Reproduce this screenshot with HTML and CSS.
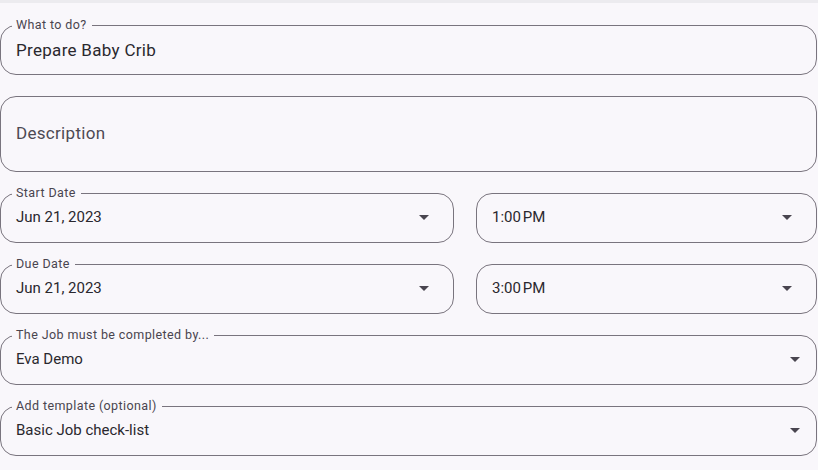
FILE: index.html
```html
<!DOCTYPE html>
<html lang="en">
<head>
<meta charset="utf-8">
<title>New Job</title>
<link rel="stylesheet" href="styles.css">
</head>
<body>
<div class="page">
  <div class="topbar"></div>
  <form class="form">
    <div class="field">
      <span class="label">What to do?</span>
      <span class="value big">Prepare Baby Crib</span>
    </div>
    <div class="field desc">
      <span class="placeholder big">Description</span>
    </div>
    <div class="row">
      <div class="field wide">
        <span class="label">Start Date</span>
        <span class="value">Jun 21, 2023</span>
        <svg class="arrow picker" viewBox="0 0 24 24" width="24" height="24"><path d="M7 10l5 5 5-5z"/></svg>
      </div>
      <div class="field narrow">
        <span class="value">1:00&#8239;PM</span>
        <svg class="arrow picker" viewBox="0 0 24 24" width="24" height="24"><path d="M7 10l5 5 5-5z"/></svg>
      </div>
    </div>
    <div class="row">
      <div class="field wide">
        <span class="label">Due Date</span>
        <span class="value">Jun 21, 2023</span>
        <svg class="arrow picker" viewBox="0 0 24 24" width="24" height="24"><path d="M7 10l5 5 5-5z"/></svg>
      </div>
      <div class="field narrow">
        <span class="value">3:00&#8239;PM</span>
        <svg class="arrow picker" viewBox="0 0 24 24" width="24" height="24"><path d="M7 10l5 5 5-5z"/></svg>
      </div>
    </div>
    <div class="field">
      <span class="label">The Job must be completed by...</span>
      <span class="value">Eva Demo</span>
      <svg class="arrow drop" viewBox="0 0 24 24" width="24" height="24"><path d="M7 10l5 5 5-5z"/></svg>
    </div>
    <div class="field">
      <span class="label">Add template (optional)</span>
      <span class="value">Basic Job check-list</span>
      <svg class="arrow drop" viewBox="0 0 24 24" width="24" height="24"><path d="M7 10l5 5 5-5z"/></svg>
    </div>
  </form>
</div>
</body>
</html>
```
FILE: styles.css
```css
html, body {
  margin: 0;
  padding: 0;
  background: #ffffff;
}

body {
  font-family: Roboto, "Liberation Sans", sans-serif;
  color: #2a282e;
}

.page {
  width: 818px;
  height: 470px;
  background: #f9f7fb;
  display: flex;
  flex-direction: column;
}

.topbar {
  height: 3px;
  background: #ecebef;
  flex: none;
}

.form {
  margin: 22px 0 0 0;
  width: 817px;
  display: flex;
  flex-direction: column;
  gap: 21px;
}

.row {
  display: flex;
  gap: 22px;
}

.field {
  position: relative;
  box-sizing: border-box;
  height: 50px;
  border: 1px solid #79747e;
  border-radius: 16px;
  padding: 0 0 0 15px;
  display: flex;
  align-items: center;
}

.field.desc {
  height: 76px;
}

.field.wide {
  flex: none;
  width: 454px;
}

.field.narrow {
  flex: 1 1 0;
}

.label {
  position: absolute;
  top: -9px;
  left: 11px;
  padding: 0 5px 0 4px;
  background: #f9f7fb;
  font-size: 12.5px;
  line-height: 16px;
  letter-spacing: 0.4px;
  color: #49454f;
  white-space: nowrap;
}

.value {
  flex: 1 1 auto;
  font-size: 15px;
  line-height: 20px;
  color: #2a282e;
  margin-top: -2px;
}

.big {
  font-size: 17px;
  letter-spacing: 0.3px;
  margin-top: 0;
}

.placeholder {
  color: #4d4953;
  margin-top: -2px;
}

.arrow {
  flex: none;
  fill: #49454f;
  margin-top: -2px;
}

.arrow.picker {
  margin-right: 17px;
}

.arrow.drop {
  margin-right: 9px;
}
```
